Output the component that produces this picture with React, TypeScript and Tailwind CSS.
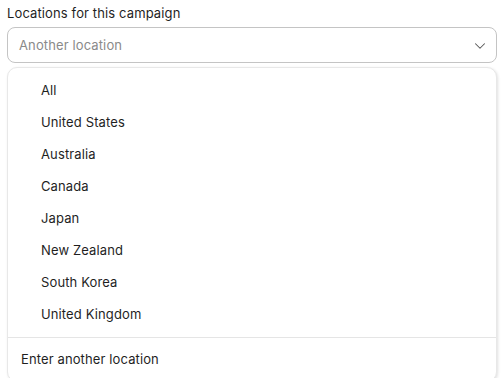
import { ChevronDown } from "lucide-react"

const locations = [
  "All",
  "United States",
  "Australia",
  "Canada",
  "Japan",
  "New Zealand",
  "South Korea",
  "United Kingdom",
]

export default function App() {
  return (
    <div className="w-[504px] h-[378px] overflow-hidden bg-white px-[7px] pt-[3px] font-['Inter',sans-serif] text-[13px] tracking-[0.12px] text-[#1f1f1f]">
      <label className="block leading-[20px]">Locations for this campaign</label>
      <button
        type="button"
        className="mt-[4px] flex h-[36px] w-[490px] items-center justify-between rounded-[8px] border border-[#c4c4c4] bg-white pt-[1px] pl-[11px] pr-[7px] text-left"
      >
        <span className="text-[#8a8a8a]">Another location</span>
        <ChevronDown className="h-[18px] w-[18px] text-[#555]" strokeWidth={1.4} />
      </button>
      <div className="mt-[4px] w-[490px] rounded-[10px] border border-[#e8e8e8] bg-white shadow-[1px_1px_3px_rgba(0,0,0,0.12)]">
        <ul className="pt-[7px] pb-[6px]">
          {locations.map((loc) => (
            <li key={loc} className="flex h-[32px] items-center pl-[33px]">
              {loc}
            </li>
          ))}
        </ul>
        <div className="flex h-[44px] items-center border-t border-[#e5e5e5] pl-[13px]">
          Enter another location
        </div>
      </div>
    </div>
  )
}
